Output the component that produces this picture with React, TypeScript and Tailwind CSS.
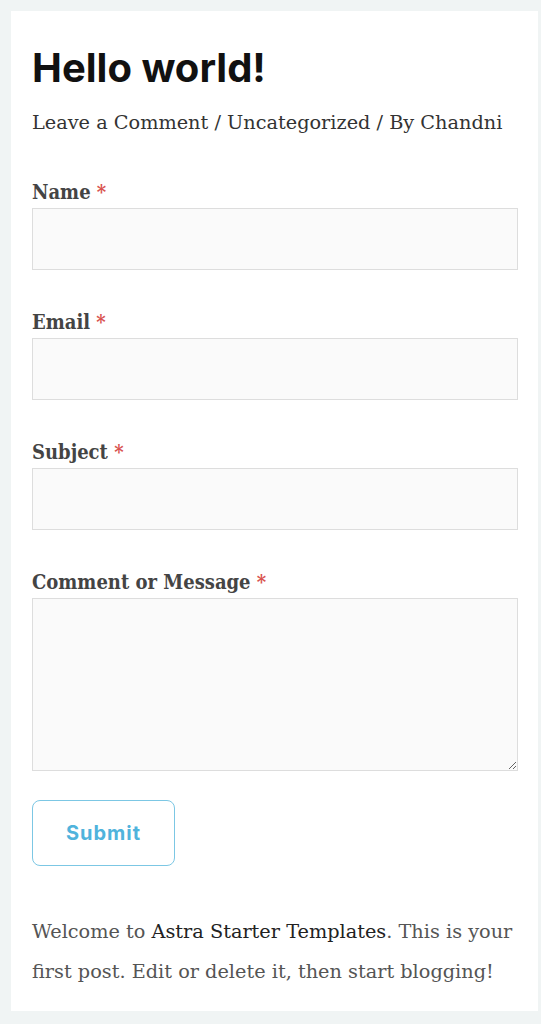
import React from "react";

const serif = "font-['DejaVu_Serif','Liberation_Serif',serif]";

function Field({ label, tall }: { label: string; tall?: boolean }) {
  return (
    <div className="flex flex-col">
      <div className="font-['DejaVu_Serif_Condensed','DejaVu_Serif',serif] [font-stretch:condensed] text-[20px] leading-[28px] font-bold text-[#444444]">
        {label} <span className="text-[#d9534f]">*</span>
      </div>
      {tall ? (
        <textarea className="mt-[2px] block h-[173px] w-[486px] border border-[#dddddd] bg-[#fafafa] outline-none" />
      ) : (
        <input className="mt-[2px] block h-[62px] w-[486px] border border-[#dddddd] bg-[#fafafa] outline-none" />
      )}
    </div>
  );
}

export default function App() {
  return (
    <div className="min-h-[1024px] w-[541px] bg-[#f0f4f4] pt-[11px] pb-[12px]">
      <div className="ml-[11px] w-[527px] bg-white pl-[21px] pr-[20px] pt-[33px] pb-[19px]">
        <h1 className="font-['Inter',sans-serif] text-[40px] leading-[48px] font-bold text-[#111111]">
          Hello world!
        </h1>
        <div className={`${serif} mt-[17px] text-[19.3px] leading-[28px] text-[#333333]`}>
          Leave a Comment / Uncategorized / By Chandni
        </div>
        <form className="mt-[41px] flex flex-col gap-[38px]" onSubmit={(e) => e.preventDefault()}>
          <Field label="Name" />
          <Field label="Email" />
          <Field label="Subject" />
          <Field label="Comment or Message" tall />
        </form>
        <button className="mt-[29px] flex h-[66px] w-[143px] items-center justify-center rounded-[8px] border border-[#7cc7e4] bg-white font-['Inter',sans-serif] text-[20px] font-bold tracking-[1px] text-[#4fb3dc]">
          Submit
        </button>
        <p className={`${serif} mt-[46px] w-[486px] text-[19.3px] leading-[40px] text-[#555555]`}>
          Welcome to <span className="text-[#222222]">Astra Starter Templates</span>. This is your first post. Edit or delete it, then start blogging!
        </p>
      </div>
    </div>
  );
}
